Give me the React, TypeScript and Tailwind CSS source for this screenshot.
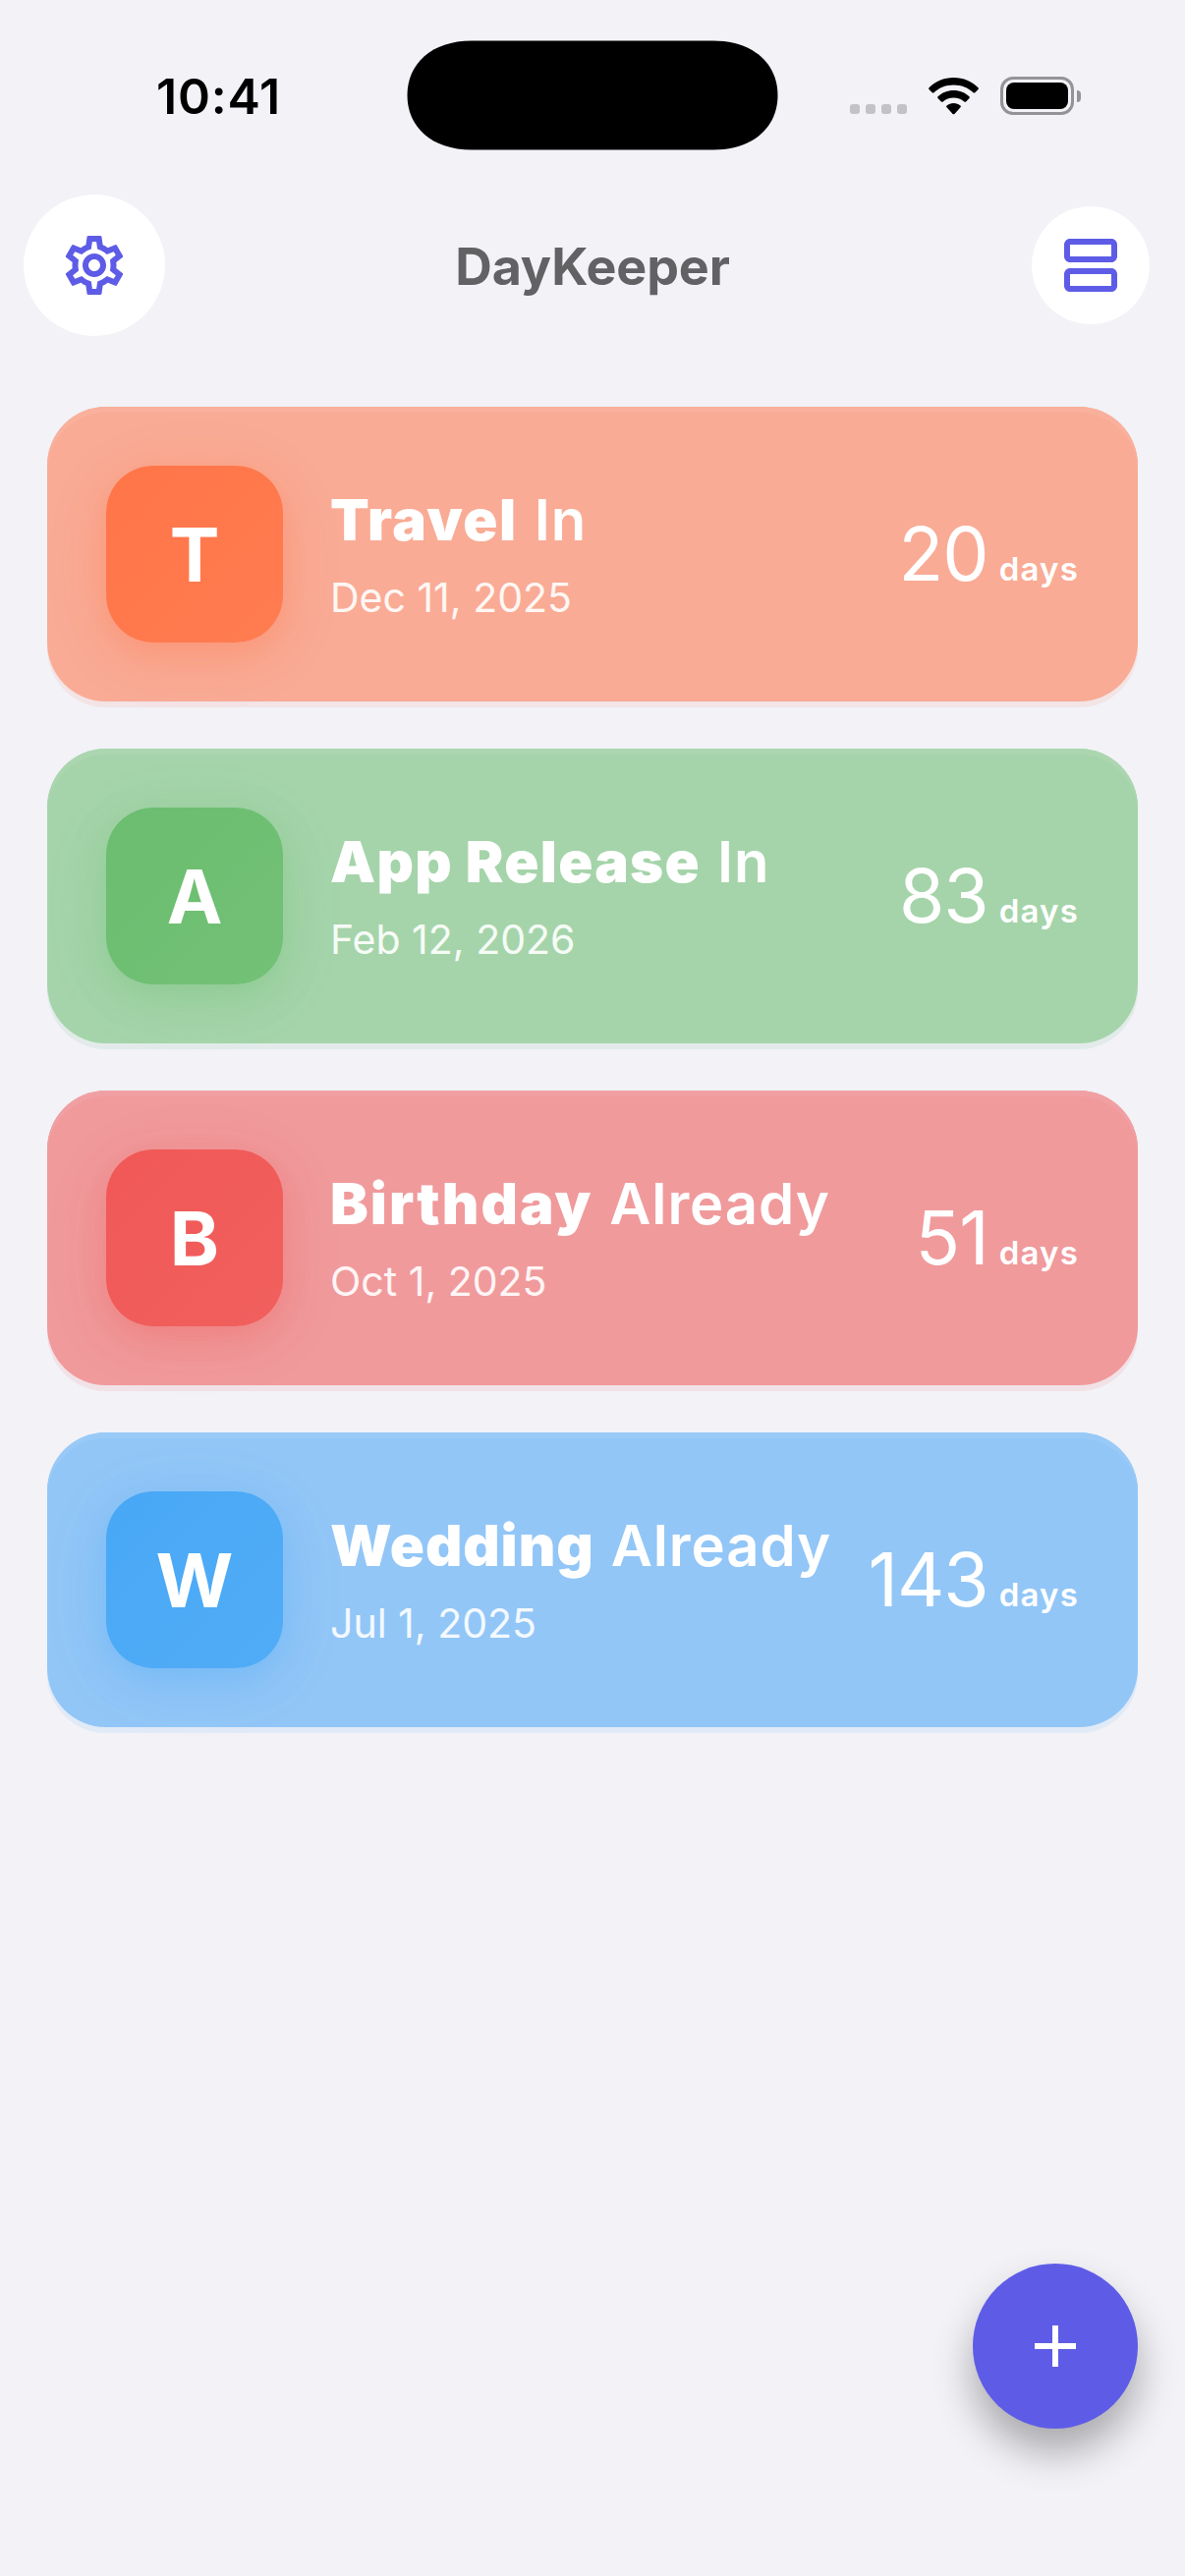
import { MdOutlineSettings, MdOutlineViewAgenda } from "react-icons/md";

const events = [
  {
    letter: "T",
    title: "Travel",
    suffix: "In",
    date: "Dec 11, 2025",
    days: 20,
    tracking: "tracking-[1.500px]",
    card: "bg-[#f9ab95] shadow-[0_6px_0_#f3e4e6,inset_0_6px_0_#f9b09c]",
    badge:
      "from-[#ff7548] to-[#ff7c51] shadow-[0_12px_36px_rgba(255,112,67,0.3),0_12px_72px_rgba(255,112,67,0.08)]",
  },
  {
    letter: "A",
    title: "App Release",
    suffix: "In",
    date: "Feb 12, 2026",
    days: 83,
    tracking: "tracking-[1.300px]",
    card: "bg-[#a5d4aa] shadow-[0_6px_0_#e3ebea,inset_0_6px_0_#abd6b0]",
    badge:
      "from-[#6bbd6f] to-[#73c177] shadow-[0_12px_36px_rgba(102,187,106,0.3),0_12px_72px_rgba(102,187,106,0.08)]",
  },
  {
    letter: "B",
    title: "Birthday",
    suffix: "Already",
    date: "Oct 1, 2025",
    days: 51,
    tracking: "tracking-[2px]",
    card: "bg-[#f09a9c] shadow-[0_6px_0_#f1e2e7,inset_0_6px_0_#f0a0a3]",
    badge:
      "from-[#f05856] to-[#f1605e] shadow-[0_12px_36px_rgba(239,83,80,0.3),0_12px_72px_rgba(239,83,80,0.08)]",
  },
  {
    letter: "W",
    title: "Wedding",
    suffix: "Already",
    date: "Jul 1, 2025",
    days: 143,
    tracking: "tracking-[0.900px]",
    card: "bg-[#92c6f7] shadow-[0_6px_0_#e1eaf7,inset_0_6px_0_#99caf7]",
    badge:
      "from-[#48a8f6] to-[#51acf6] shadow-[0_12px_36px_rgba(66,165,245,0.3),0_12px_72px_rgba(66,165,245,0.08)]",
  },
];

const StatusBar = () => {
  return (
    <div className="h-[198px] flex items-start text-black">
      <div className="w-[414px] pt-[68px] pl-[159px] text-[50px] leading-[60px] font-semibold tracking-[0.800px]">
        10:41
      </div>
      <svg className="mt-[41px] w-[378px] h-[112px]" viewBox="0 0 378 112">
        <path d="M66 .5H312C353 .5 377.500 24 377.500 56S353 111.500 312 111.500H66C25 111.500 .5 88 .5 56S25 .5 66 .5Z" />
      </svg>
      <div className="flex items-end h-[39px] mt-[78px] ml-[73px]">
        <div className="flex gap-[6px] mb-[1px]">
          {[0, 1, 2, 3].map((dot) => (
            <div key={dot} className="w-[10px] h-[10px] rounded-[3px] bg-[#c3c2c7]" />
          ))}
        </div>
        <svg className="w-[51px] h-[38px] ml-[22px]" viewBox="0 0 51 38">
          <path d="M25.500 0C35.500 0 44.300 3.900 50.500 10.200Q51.300 11 50.500 11.900L47.300 15.200Q46.400 16 45.500 15.200C40.200 10.200 33.300 7.500 25.500 7.500S10.800 10.200 5.500 15.200Q4.600 16 3.700 15.200L.5 11.900Q-.3 11 .5 10.200C6.700 3.900 15.500 0 25.500 0Z" />
          <path d="M25.500 13C31.800 13 37.400 15.400 41.500 19.300Q42.300 20.200 41.500 21L38.100 24.400Q37.200 25.200 36.300 24.400C33.400 21.900 29.700 20.500 25.500 20.500S17.600 21.900 14.700 24.400Q13.800 25.200 12.900 24.400L9.500 21Q8.700 20.200 9.500 19.300C13.600 15.400 19.200 13 25.500 13Z" />
          <path d="M25.500 26C28.100 26 30.600 26.900 32.500 28.400Q33.400 29.300 32.500 30.200L26.400 36.900Q25.500 37.700 24.600 36.900L18.500 30.200Q17.600 29.300 18.500 28.400C20.400 26.900 22.900 26 25.500 26Z" />
        </svg>
        <div className="ml-[22px] flex items-center gap-[3px]">
          <div className="w-[75px] h-[39px] border-3 border-[#949397] rounded-[13px] p-[3px]">
            <div className="h-full rounded-[8px] bg-black" />
          </div>
          <div className="w-[4px] h-[12px] rounded-r-[4px] bg-[#949397]" />
        </div>
      </div>
    </div>
  );
};

const Header = () => {
  return (
    <div className="flex justify-between items-center pl-6 pr-9 h-[144px]">
      <div className="w-[144px] h-[144px] rounded-full bg-white flex items-center justify-center">
        <MdOutlineSettings size={72} color="#5e5ce6" />
      </div>
      <h1 className="text-[52px] font-bold tracking-[-0.100px] text-[#626164] ml-[-12px] pt-[3px]">
        DayKeeper
      </h1>
      <div className="w-[120px] h-[120px] rounded-full bg-white flex items-center justify-center">
        <MdOutlineViewAgenda size={72} color="#5e5ce6" />
      </div>
    </div>
  );
};

const App = () => {
  return (
    <div className="relative w-[1206px] h-[2622px] bg-[#f2f2f7] font-['Inter',sans-serif] overflow-hidden">
      <StatusBar />
      <Header />
      <div className="flex flex-col gap-12 px-12 pt-[72px]">
        {events.map((event) => (
          <div
            key={event.letter}
            className={`h-[300px] rounded-[60px] flex items-center px-[60px] text-white ${event.card}`}
          >
            <div
              className={`w-[180px] h-[180px] rounded-[48px] bg-linear-to-br flex items-center justify-center text-[76px] font-bold ${event.badge}`}
            >
              {event.letter}
            </div>
            <div className="ml-12 flex-1 whitespace-nowrap">
              <h2 className={`text-[58px] leading-[72px] font-black ${event.tracking}`}>
                {event.title}
                <span className="font-semibold ml-[17px] tracking-[0.900px]">{event.suffix}</span>
              </h2>
              <p className="text-[41px] leading-[54px] mt-4 font-normal text-white/90">
                {event.date}
              </p>
            </div>
            <div className="flex items-baseline gap-[11px]">
              <span className="text-[75px] font-normal tracking-[-1px]">{event.days}</span>
              <span className="text-[33px] font-semibold tracking-[1.200px]">days</span>
            </div>
          </div>
        ))}
      </div>
      {/* floating add button */}
      <button className="absolute right-12 bottom-[150px] w-[168px] h-[168px] rounded-full bg-[#5e5ce6] flex items-center justify-center shadow-[0_24px_40px_rgba(0,0,0,0.3)]">
        <svg className="w-[42px] h-[42px]" viewBox="0 0 42 42">
          <path d="M18 0H24V18H42V24H24V42H18V24H0V18H18Z" fill="white" />
        </svg>
      </button>
    </div>
  );
};

export default App;
